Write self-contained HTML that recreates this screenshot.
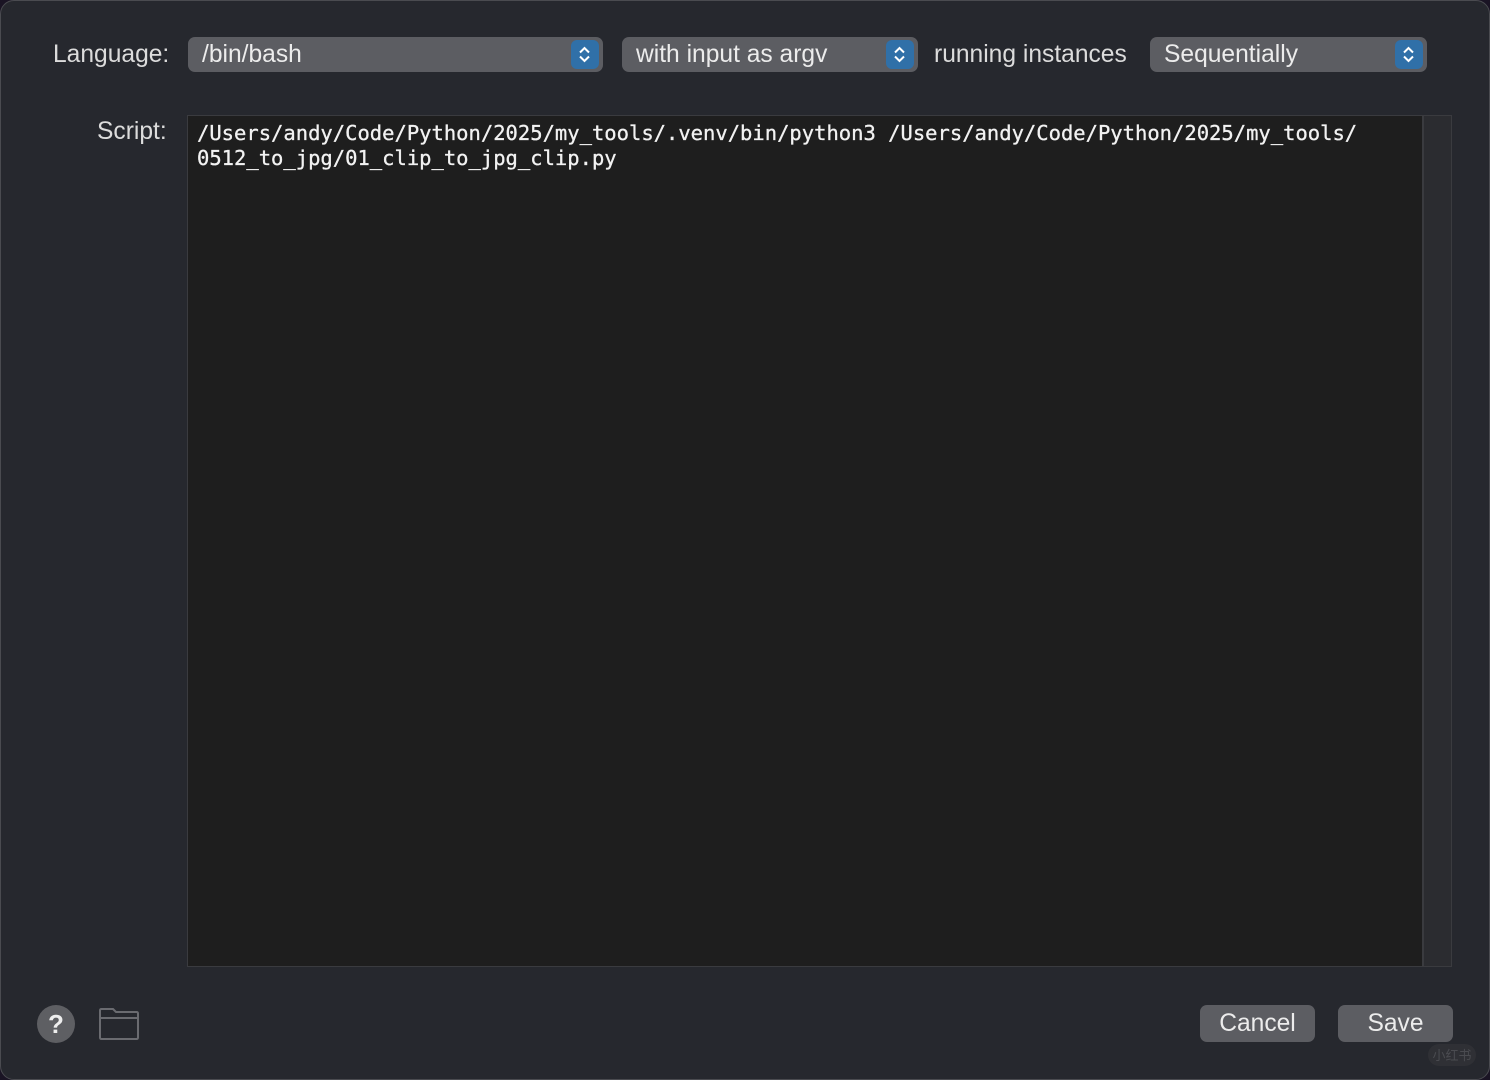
<!DOCTYPE html>
<html><head><meta charset="utf-8"><style>
body{margin:0;width:1490px;height:1080px;background:#1a1424;font-family:"Liberation Sans",sans-serif;overflow:hidden;position:relative}
.win{position:absolute;left:0;top:0;width:1488px;height:1078px;background:#26282e;border:1px solid #4a4b50;border-radius:14px}
.lbl{position:absolute;color:#dcdcdc;font-size:24.6px}
.pop{position:absolute;top:37px;height:35px;background:#5c5d62;border-radius:7px;color:#ececec;font-size:24.6px;line-height:35px;box-sizing:border-box;padding-left:14px}
.st{position:absolute;right:4px;top:3px;width:28px;height:29px;background:#3070a8;border-radius:6px}
.st svg{position:absolute;left:6px;top:6px}
.ta{position:absolute;left:187px;top:115px;width:1236px;height:852px;background:#1e1e1e;border:1px solid #3a3b3f;box-sizing:border-box}
.sb{position:absolute;left:1423px;top:115px;width:29px;height:852px;background:#2b2c30;border:1px solid #3a3b3f;box-sizing:border-box}
.code{position:absolute;left:197px;top:121px;color:#f2f2f2;font-family:"DejaVu Sans Mono","Liberation Mono",monospace;font-size:20.5px;line-height:25px;white-space:pre;-webkit-text-stroke:0.3px #f2f2f2}
.btn{position:absolute;top:1005px;width:115px;height:37px;background:#5c5d62;border-radius:7px;color:#ececec;font-size:24.6px;text-align:center;line-height:37px}
</style></head><body>
<div class="win"></div>
<div class="lbl" style="left:53px;top:41px">Language:</div>
<div class="pop" style="left:188px;width:415px">/bin/bash<div class="st"><svg width="15" height="17" viewBox="0 0 15 17"><path d="M3 6.5L7.5 2L12 6.5M3 10.5L7.5 15L12 10.5" stroke="#fff" stroke-width="2" fill="none"/></svg></div></div>
<div class="pop" style="left:622px;width:296px">with input as argv<div class="st"><svg width="15" height="17" viewBox="0 0 15 17"><path d="M3 6.5L7.5 2L12 6.5M3 10.5L7.5 15L12 10.5" stroke="#fff" stroke-width="2" fill="none"/></svg></div></div>
<div class="lbl" style="left:934px;top:41px">running instances</div>
<div class="pop" style="left:1150px;width:277px">Sequentially<div class="st"><svg width="15" height="17" viewBox="0 0 15 17"><path d="M3 6.5L7.5 2L12 6.5M3 10.5L7.5 15L12 10.5" stroke="#fff" stroke-width="2" fill="none"/></svg></div></div>
<div class="lbl" style="left:97px;top:118px">Script:</div>
<div class="ta"></div><div class="sb"></div>
<div class="code">/Users/andy/Code/Python/2025/my_tools/.venv/bin/python3 /Users/andy/Code/Python/2025/my_tools/
0512_to_jpg/01_clip_to_jpg_clip.py</div>
<div style="position:absolute;left:37px;top:1005px;width:38px;height:38px;border-radius:50%;background:#5e5f63;color:#eee;font-size:26px;text-align:center;line-height:38px;font-weight:bold">?</div>
<svg style="position:absolute;left:98px;top:1007px" width="42" height="34" viewBox="0 0 42 34"><path d="M2 3.5Q2 2 3.5 2H15L18 5H38.5Q40 5 40 6.5V30.5Q40 32 38.5 32H3.5Q2 32 2 30.5Z M2 11H40" stroke="#6a6b70" stroke-width="2" fill="none"/></svg>
<div class="btn" style="left:1200px">Cancel</div>
<div class="btn" style="left:1338px">Save</div>
<div style="position:absolute;left:1428px;top:1044px;width:48px;height:22px;border-radius:11px;background:#2f3035;color:#4a4b50;font-size:13px;text-align:center;line-height:22px;font-family:'Noto Sans CJK SC',sans-serif">小红书</div>
</body></html>
